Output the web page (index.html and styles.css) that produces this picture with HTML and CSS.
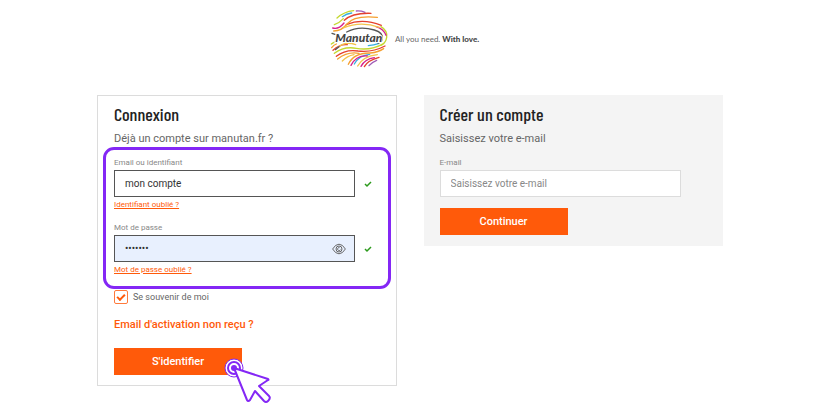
FILE: index.html
```html
<!DOCTYPE html>
<html lang="fr">
<head>
<meta charset="utf-8">
<title>Manutan - Connexion</title>
<link rel="stylesheet" href="styles.css">
</head>
<body>
<header class="brand">
  <svg class="brand-logo" viewBox="30 27 180 180" role="img" aria-label="Manutan">
    <g fill="none" stroke-width="4" stroke-linecap="round">
      <path stroke="#c4d82e" d="M54 54Q75 35 104 32M46 74Q60 70 73 56M37 132Q42 128 48 126M46 160Q75 138 112 145Q155 153 195 130M186 80Q206 92 203 112Q201 128 186 136"/>
      <path stroke="#a05bb5" d="M112 33Q126 32 138 37M150 197Q160 186 173 181"/>
      <path stroke="#35b0e0" d="M70 50Q82 41 98 39M148 137Q165 136 178 131M106 192Q120 166 152 163"/>
      <path stroke="#e5412d" d="M76 61Q100 38 156 40M82 74Q130 53 187 76M42 151Q62 132 85 134M52 169Q80 147 117 153Q160 158 198 138M136 200Q146 181 180 172"/>
      <path stroke="#f5a030" d="M44 93Q68 93 84 72Q105 45 175 52M38 143Q44 135 52 132M56 177Q85 154 120 160M88 193Q104 158 154 159Q178 157 194 146"/>
      <path stroke="#d6218c" d="M41 84Q58 90 75 69M171 80Q193 86 201 106M96 196Q112 165 145 168M126 199Q138 177 166 173"/>
      <path stroke="#f3c44c" d="M75 83Q125 62 181 82M60 140Q80 123 110 134M70 183Q84 168 105 164M116 198Q132 169 175 164"/>
      <path stroke="#555" d="M83 96Q120 76 166 90Q195 99 190 118Q188 127 177 129M39 100L48 103M49 149L60 140"/>
    </g>
    <text class="brand-name" x="49" y="127">Manutan</text>
  </svg>
  <p class="brand-tagline">All you need. <strong>With love.</strong></p>
</header>
<main class="panels">
  <form class="panel panel-login">
    <h1 class="panel-title">Connexion</h1>
    <p class="panel-intro">Déjà un compte sur manutan.fr ?</p>
    <div class="field">
      <label class="field-label" for="login">Email ou identifiant</label>
      <div class="field-row">
        <div class="field-box"><input class="field-input" id="login" type="text" value="mon compte"></div>
        <svg class="field-check" viewBox="0 0 8 8" aria-hidden="true"><path d="M1 4l2 2 4-4"/></svg>
      </div>
      <a class="field-link" href="#">Identifiant oublié ?</a>
    </div>
    <div class="field">
      <label class="field-label" for="password">Mot de passe</label>
      <div class="field-row">
        <div class="field-box field-box-filled">
          <input class="field-input" id="password" type="password" value="abcdefg">
          <button class="reveal" type="button" aria-label="Afficher le mot de passe">
            <svg class="reveal-icon" viewBox="0 0 14 12" aria-hidden="true"><path d="M.6 6Q3.500 1.200 7 1.200T13.400 6Q10.500 10.800 7 10.800T.6 6Z"/><circle cx="7" cy="6" r="3"/><path d="M7.500 4.600a1.500 1.500 0 1 0 1 2"/></svg>
          </button>
        </div>
        <svg class="field-check" viewBox="0 0 8 8" aria-hidden="true"><path d="M1 4l2 2 4-4"/></svg>
      </div>
      <a class="field-link" href="#">Mot de passe oublié ?</a>
    </div>
    <label class="remember"><input class="remember-box" type="checkbox" checked>Se souvenir de moi</label>
    <a class="activation" href="#">Email d'activation non reçu ?</a>
    <div class="submit">
      <button class="button" type="button">S'identifier</button>
      <svg class="pointer" viewBox="0 0 48 46" aria-hidden="true">
        <circle class="pointer-halo" cx="10" cy="10" r="9"/>
        <circle class="pointer-ring" cx="10" cy="10" r="6"/>
        <path class="pointer-arrow" d="M10 10L44 21Q45 22 44 22L35 28L45 38Q47 40 44 43Q42 45 40 43L31 33L26 42Q24 44 23 42Z"/>
        <circle class="pointer-dot" cx="10" cy="10" r="3"/>
      </svg>
    </div>
    <span class="highlight"></span>
  </form>
  <form class="panel panel-signup">
    <h2 class="panel-title">Créer un compte</h2>
    <p class="panel-intro">Saisissez votre e-mail</p>
    <div class="field">
      <label class="field-label" for="email">E-mail</label>
      <div class="field-row">
        <div class="field-box field-box-light"><input class="field-input" id="email" type="email" placeholder="Saisissez votre e-mail"></div>
      </div>
    </div>
    <button class="button" type="button">Continuer</button>
  </form>
</main>
</body>
</html>
```
FILE: styles.css
```css
* { box-sizing: border-box; }
body { margin: 0; min-height: 100vh; background: #fff; color: #666; font-family: Roboto, sans-serif; }
p, h1, h2 { margin: 0; }
input, button { font-family: inherit; }

.brand { display: flex; justify-content: center; align-items: center; gap: 6px; padding: 9px 6px 0 0; }
.brand-logo { width: 60px; height: 60px; }
.brand-name { font: italic 900 36px Lato, sans-serif; fill: #444; stroke: #fff; stroke-width: 6px; paint-order: stroke; }
.brand-tagline { font: 8px/10px Lato, sans-serif; color: #666; }
.brand-tagline strong { font-weight: 900; color: #444; }

.panels { display: grid; grid-template-columns: 1fr 1fr; align-items: start; gap: 27px; padding: 26px 91px 18px 97px; }
.panel { position: relative; padding: 7px 16px 10px; border: 1px solid #dcdcdc; }
.panel-signup { padding: 8px 16px 11px; border: 0; background: #f4f4f4; }
.panel-title { font: 500 18px/22px "Barlow Condensed", "Roboto Condensed", "Liberation Sans Narrow", Roboto, sans-serif; color: #222; }
.panel-intro { margin: 6px 0 11px; font-size: 11px; line-height: 16px; }

.field { display: flex; flex-direction: column; align-items: flex-start; margin-bottom: 10px; }
.field-label { margin-bottom: 2px; font-size: 8px; line-height: 10px; color: #888; }
.field-row { display: flex; align-items: center; gap: 9px; width: 100%; }
.field-box { display: flex; align-items: center; flex: 0 1 241px; height: 27px; border: 1px solid #555; background: #fff; }
.field-box-filled { background: #e8f0fe; }
.field-box-light { border-color: #dcdcdc; }
.field-input { flex: 1; min-width: 0; padding: 0 10px; border: 0; outline: 0; background: none; font-size: 10px; color: #333; }
.field-input::placeholder { color: #888; }
.field-check { width: 8px; height: 8px; fill: none; stroke: #2c9a1c; stroke-width: 1.500; }
.field-link { font-size: 8px; line-height: 16px; color: #ff5a0a; }
.reveal { display: flex; padding: 0 8px 0 0; border: 0; background: none; }
.reveal-icon { width: 14px; height: 12px; fill: none; stroke: #666; }

.remember { display: flex; align-items: center; gap: 5px; margin-top: 12px; font-size: 9px; line-height: 14px; }
.remember-box { appearance: none; display: grid; place-items: center; width: 14px; height: 14px; margin: 0; border: 1px solid #ff7a3c; border-radius: 2px; background: #fff; }
.remember-box:checked::before { content: ""; box-sizing: border-box; width: 8px; height: 5px; margin-bottom: 2px; border: solid #ff5a0a; border-width: 0 0 2px 2px; transform: rotate(-45deg); }
.activation { display: block; margin: 14px 0 16px; font-size: 11px; font-weight: 500; line-height: 14px; color: #ff5a0a; text-decoration: none; }
.submit { position: relative; width: 128px; }
.button { display: block; width: 128px; height: 27px; padding: 0; border: 0; background: #ff5a0a; color: #fff; font-size: 11px; font-weight: 500; }
.panel-signup .button { margin-top: 11px; }
.panel-signup .field { margin-bottom: 0; }

.pointer { position: absolute; top: 10px; left: 110px; z-index: 1; width: 48px; height: 46px; overflow: visible; }
.pointer-halo { fill: #fff; stroke: #8427f5; stroke-width: 1; }
.pointer-ring { fill: #fff; stroke: #8427f5; stroke-width: 2; }
.pointer-arrow { fill: #fff; stroke: #8427f5; stroke-width: 2; stroke-linejoin: round; }
.pointer-dot { fill: #8427f5; }
.highlight { position: absolute; top: 51px; left: 5px; right: 5px; height: 142px; border: 3px solid #8427f5; border-radius: 11px; pointer-events: none; }
```
